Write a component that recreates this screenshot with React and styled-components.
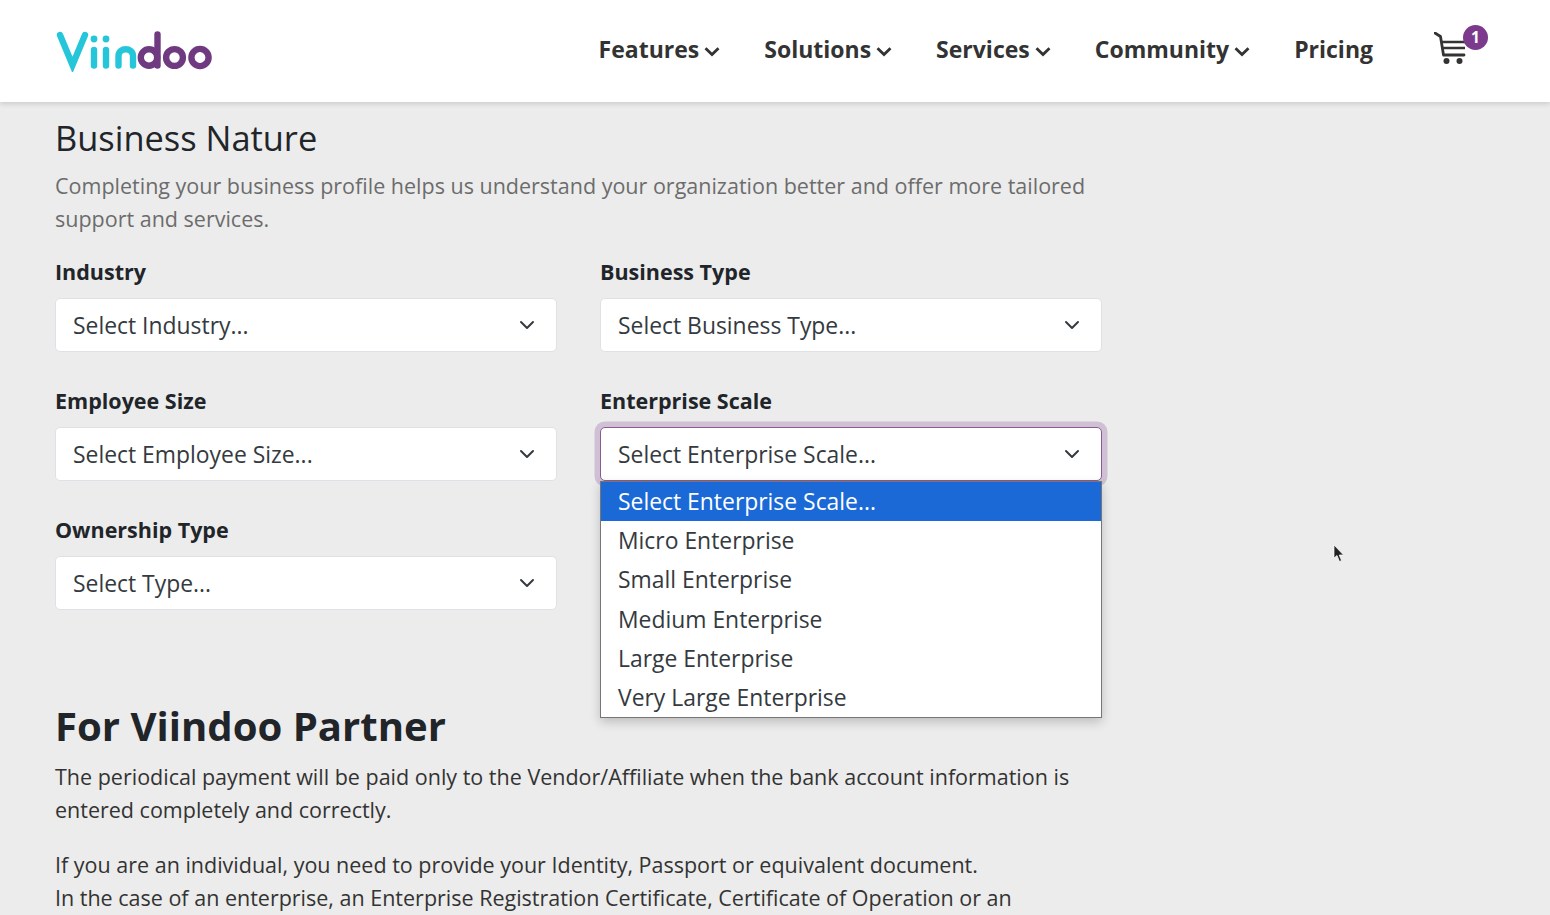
import React from 'react';
import styled, { createGlobalStyle } from 'styled-components';

const scaleOptions = [
  'Select Enterprise Scale...',
  'Micro Enterprise',
  'Small Enterprise',
  'Medium Enterprise',
  'Large Enterprise',
  'Very Large Enterprise',
];

export default function App() {
  return (
    <Page>
      <GlobalStyle />
      <Navbar>
        <Logo />
        <Links>
          <NavItem>Features<Chevron /></NavItem>
          <NavItem>Solutions<Chevron /></NavItem>
          <NavItem>Services<Chevron /></NavItem>
          <NavItem>Community<Chevron /></NavItem>
          <NavItem>Pricing</NavItem>
        </Links>
        <Cart>
          <CartIcon />
          <Badge>1</Badge>
        </Cart>
      </Navbar>
      <Main>
        <Title>Business Nature</Title>
        <Lead>
          Completing your business profile helps us understand your organization better and offer more tailored support and services.
        </Lead>
        <FormGrid>
          <Field>
            <Label>Industry</Label>
            <Select>Select Industry...<SelectArrow /></Select>
          </Field>
          <Field>
            <Label>Business Type</Label>
            <Select>Select Business Type...<SelectArrow /></Select>
          </Field>
          <Field>
            <Label>Employee Size</Label>
            <Select>Select Employee Size...<SelectArrow /></Select>
          </Field>
          <Field>
            <Label>Enterprise Scale</Label>
            <Select $focused>Select Enterprise Scale...<SelectArrow /></Select>
            <OptionList>
              {scaleOptions.map((option, i) => (
                <Option key={option} $active={i === 0}>{option}</Option>
              ))}
            </OptionList>
          </Field>
          <Field>
            <Label>Ownership Type</Label>
            <Select>Select Type...<SelectArrow /></Select>
          </Field>
        </FormGrid>
        <Heading>For Viindoo Partner</Heading>
        <Text>
          The periodical payment will be paid only to the Vendor/Affiliate when the bank account information is entered completely and correctly.
        </Text>
        <Text>
          If you are an individual, you need to provide your Identity, Passport or equivalent document.<br />
          In the case of an enterprise, an Enterprise Registration Certificate, Certificate of Operation or an
        </Text>
      </Main>
      <Pointer />
    </Page>
  );
}

function Logo() {
  return (
    <LogoSvg width="160" height="44" viewBox="55 28 160 44" fill="none" strokeLinecap="round" aria-label="Viindoo">
      <g stroke="#26c6da" strokeWidth="6.4">
        <path d="M60 35 L72.5 65 L85 35" />
        <path d="M94 50 V65.5" />
        <path d="M106 50 V65.5" />
        <path d="M118.5 65.5 V56 C118.5 47 133 47 133 56 V65.5" />
      </g>
      <circle cx="94" cy="39" r="3.4" fill="#26c6da" />
      <circle cx="106" cy="39" r="3.4" fill="#26c6da" />
      <g stroke="#6f3a80" strokeWidth="6.4">
        <circle cx="149" cy="57.5" r="8.2" />
        <path d="M157.5 34.5 V65.5" />
        <circle cx="174.5" cy="57.5" r="8.4" />
        <circle cx="200" cy="57.5" r="8.6" />
      </g>
    </LogoSvg>
  );
}

function Chevron() {
  return (
    <ChevronSvg width="16" height="11" viewBox="0 0 16 11" fill="none">
      <path d="M1.5 2.2 L8 8.5 L14.5 2.2" stroke="#333" strokeWidth="2.8" />
    </ChevronSvg>
  );
}

function SelectArrow() {
  return (
    <ArrowSvg width="16" height="16" viewBox="0 0 16 16" fill="none">
      <path d="M2 5 L8 11 L14 5" stroke="#343a40" strokeWidth="2" strokeLinecap="round" strokeLinejoin="round" />
    </ArrowSvg>
  );
}

function CartIcon() {
  return (
    <svg width="36" height="34" viewBox="0 0 36 34" fill="none" stroke="#333">
      <path d="M1 1 L6.5 4.5 L9.5 23 H30" strokeWidth="2.8" strokeLinecap="round" strokeLinejoin="round" />
      <path d="M8 10 H31 M9 16 H31" strokeWidth="2.6" />
      <circle cx="12.5" cy="29" r="3" fill="#333" stroke="none" />
      <circle cx="25.5" cy="29" r="3" fill="#333" stroke="none" />
    </svg>
  );
}

function Pointer() {
  return (
    <PointerSvg width="12" height="19" viewBox="0 0 12 19">
      <path d="M1 1 V14 L4 11.5 L6.5 17.5 L8.5 16.5 L6.2 11 H10.5 Z" fill="#222" stroke="#fff" strokeWidth="0.7" />
    </PointerSvg>
  );
}

const GlobalStyle = createGlobalStyle`
  html, body {
    margin: 0;
    height: 100%;
    overflow: hidden;
  }

  body {
    background-color: #ececec;
    color: #212529;
    font-family: "Open Sans", "Noto Sans", sans-serif;
    font-size: 21.5px;
    line-height: 33px;
  }
`;

const Page = styled.div`
  position: relative;
  height: 915px;
  overflow: hidden;
`;

const Navbar = styled.nav`
  height: 102px;
  box-sizing: border-box;
  padding-left: 55px;
  padding-right: 61px;
  display: flex;
  align-items: center;
  background-color: #fff;
  box-shadow: 0 2px 5px rgba(0, 0, 0, 0.14);
`;

const LogoSvg = styled.svg`
  display: block;
  margin-top: -3px;
`;

const Links = styled.div`
  margin-left: auto;
  display: flex;
  gap: 44px;
  color: #333;
  font-size: 23px;
  font-weight: 700;
  margin-top: -3px;
`;

const NavItem = styled.span`
  display: flex;
  align-items: center;
  gap: 5px;
`;

const ChevronSvg = styled.svg`
  display: block;
  margin-top: 3px;
`;

const Cart = styled.div`
  position: relative;
  width: 55px;
  height: 38px;
  margin-left: 61px;
`;

const Badge = styled.span`
  position: absolute;
  top: -7px;
  right: 1px;
  width: 25px;
  height: 25px;
  border-radius: 50%;
  display: flex;
  align-items: center;
  justify-content: center;
  background-color: #7c3a8c;
  color: #fff;
  font-size: 15.6px;
  font-weight: 700;
  line-height: 1;
`;

const Main = styled.main`
  width: 1047px;
  margin-left: 55px;
  padding-top: 14px;
`;

const Title = styled.h1`
  margin: 0;
  font-size: 34.4px;
  font-weight: 400;
  line-height: 44px;
`;

const Lead = styled.p`
  margin: 9px 0 0;
  color: #6c6c6c;
`;

const FormGrid = styled.div`
  margin-top: 20px;
  display: grid;
  grid-template-columns: 502px 502px;
  column-gap: 43px;
  row-gap: 32px;
`;

const Field = styled.div`
  position: relative;
`;

const Label = styled.div`
  margin-bottom: 9px;
  font-weight: 700;
  height: 34px;
`;

const Select = styled.div`
  height: 54px;
  box-sizing: border-box;
  padding: 0 21px 0 17px;
  display: flex;
  align-items: center;
  justify-content: space-between;
  background-color: #fff;
  border: 1px solid ${(p) => (p.$focused ? '#8a5a96' : '#dee2e6')};
  border-radius: 5px;
  color: #343a40;
  font-size: 22.9px;
  box-shadow: ${(p) => (p.$focused ? '0 0 0 5.5px rgba(124, 58, 140, 0.25)' : 'none')};
`;

const ArrowSvg = styled.svg`
  display: block;
`;

const OptionList = styled.div`
  position: absolute;
  top: 97px;
  left: 0;
  right: 0;
  z-index: 5;
  background-color: #fff;
  border: 1px solid #767676;
  box-shadow: 0 4px 10px rgba(0, 0, 0, 0.2);
`;

const Option = styled.div`
  height: 39.2px;
  padding-left: 17px;
  display: flex;
  align-items: center;
  font-size: 22.9px;
  background-color: ${(p) => (p.$active ? '#1a69d6' : '#fff')};
  color: ${(p) => (p.$active ? '#fff' : '#343a40')};
`;

const Heading = styled.h2`
  margin: 90px 0 0;
  font-size: 40.1px;
  font-weight: 700;
  line-height: 52px;
`;

const Text = styled.p`
  margin: 0 0 22px;
  color: #333;

  ${Heading} + & {
    margin-top: 8px;
  }
`;

const PointerSvg = styled.svg`
  position: absolute;
  left: 1333px;
  top: 544px;
`;
